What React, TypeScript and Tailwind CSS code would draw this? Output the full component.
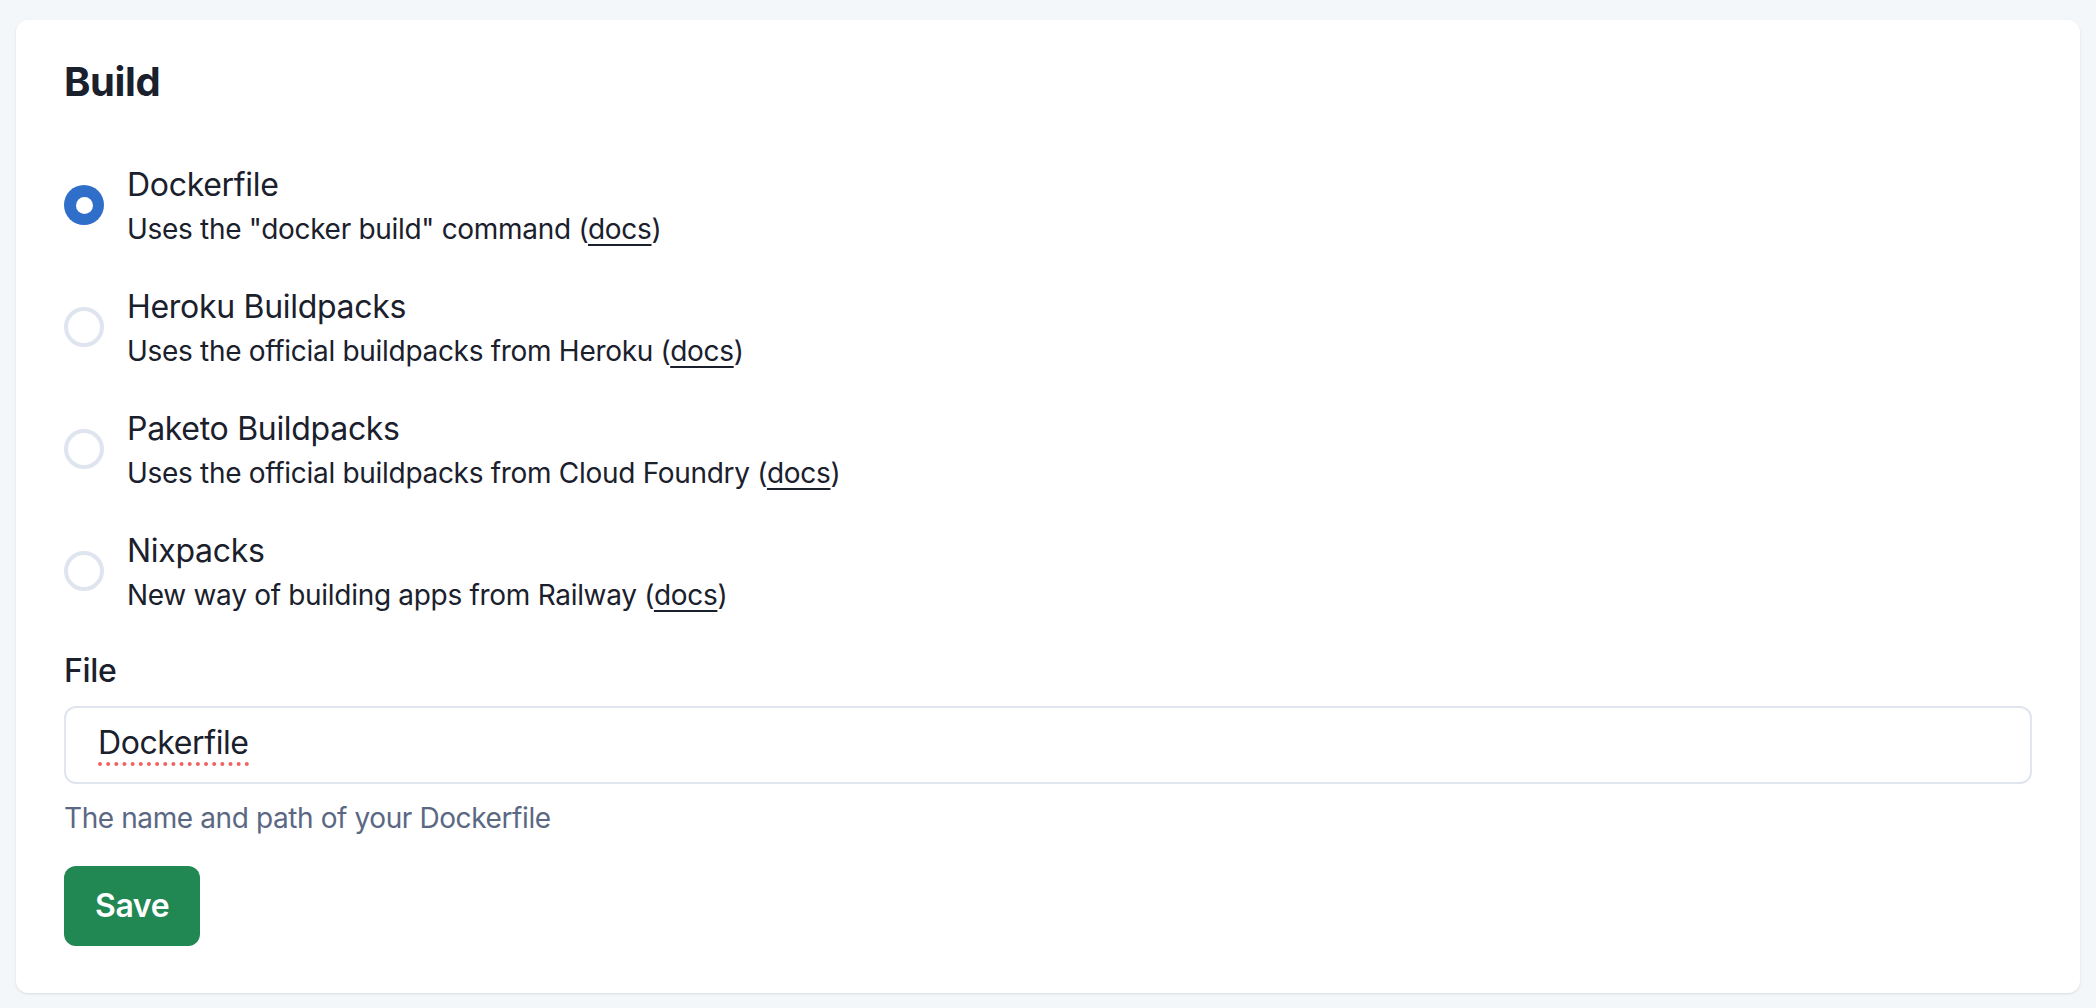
import React from "react";

type Opt = { title: string; pre: string; checked?: boolean };

const options: Opt[] = [
  { title: "Dockerfile", pre: 'Uses the "docker build" command', checked: true },
  { title: "Heroku Buildpacks", pre: "Uses the official buildpacks from Heroku" },
  { title: "Paketo Buildpacks", pre: "Uses the official buildpacks from Cloud Foundry" },
  { title: "Nixpacks", pre: "New way of building apps from Railway" },
];

function Radio({ checked }: { checked?: boolean }) {
  if (checked) {
    return (
      <span className="flex h-[40px] w-[40px] shrink-0 items-center justify-center rounded-full bg-[#2f6fca]">
        <span className="h-[17px] w-[17px] rounded-full bg-white" />
      </span>
    );
  }
  return <span className="h-[40px] w-[40px] shrink-0 rounded-full border-[4px] border-[#dfe5ef] bg-white" />;
}

export default function App() {
  return (
    <div
      className="min-h-screen bg-[#f4f7fa] px-[16px] pt-[20px] pb-[15px] text-[#1a202c]"
      style={{ fontFamily: "Inter, 'Noto Sans', 'Liberation Sans', sans-serif" }}
    >
      <div className="rounded-[12px] bg-white px-[48px] pt-[38px] pb-[47px] shadow-[0_1px_3px_rgba(0,0,0,0.08),0_1px_2px_rgba(0,0,0,0.04)]">
        <h2 className="text-[40px] font-bold leading-[48px] tracking-[-0.4px]">Build</h2>

        <div className="mt-[55px] flex flex-col gap-[34px]">
          {options.map((o) => (
            <label key={o.title} className="flex items-center gap-[23px]">
              <Radio checked={o.checked} />
              <div className="flex flex-col">
                <span className="text-[32px] leading-[48px] tracking-[-0.3px]">{o.title}</span>
                <span className="text-[28px] leading-[40px] tracking-[-0.3px]">
                  {o.pre} (
                  <a className="underline decoration-[2px] underline-offset-[5px]">docs</a>)
                </span>
              </div>
            </label>
          ))}
        </div>

        <div className="mt-[32px]">
          <div className="mb-[11px] text-[32px] font-medium leading-[48px] tracking-[-0.3px]">File</div>
          <div
            role="textbox"
            className="flex h-[78px] w-full items-center rounded-[12px] border-2 border-[#e0e5ee] px-[32px] text-[32px] tracking-[-0.4px] text-[#1a202c]"
          >
            <span className="border-b-[4px] border-dotted border-[#f26262] leading-[38px]">Dockerfile</span>
          </div>
          <div className="mt-[14px] text-[28px] leading-[40px] tracking-[-0.4px] text-[#5a6883]">
            The name and path of your Dockerfile
          </div>
        </div>

        <button className="mt-[28px] flex h-[80px] items-center rounded-[12px] bg-[#218753] px-[31px] text-[32px] font-semibold tracking-[-0.4px] text-white">
          Save
        </button>
      </div>
    </div>
  );
}
